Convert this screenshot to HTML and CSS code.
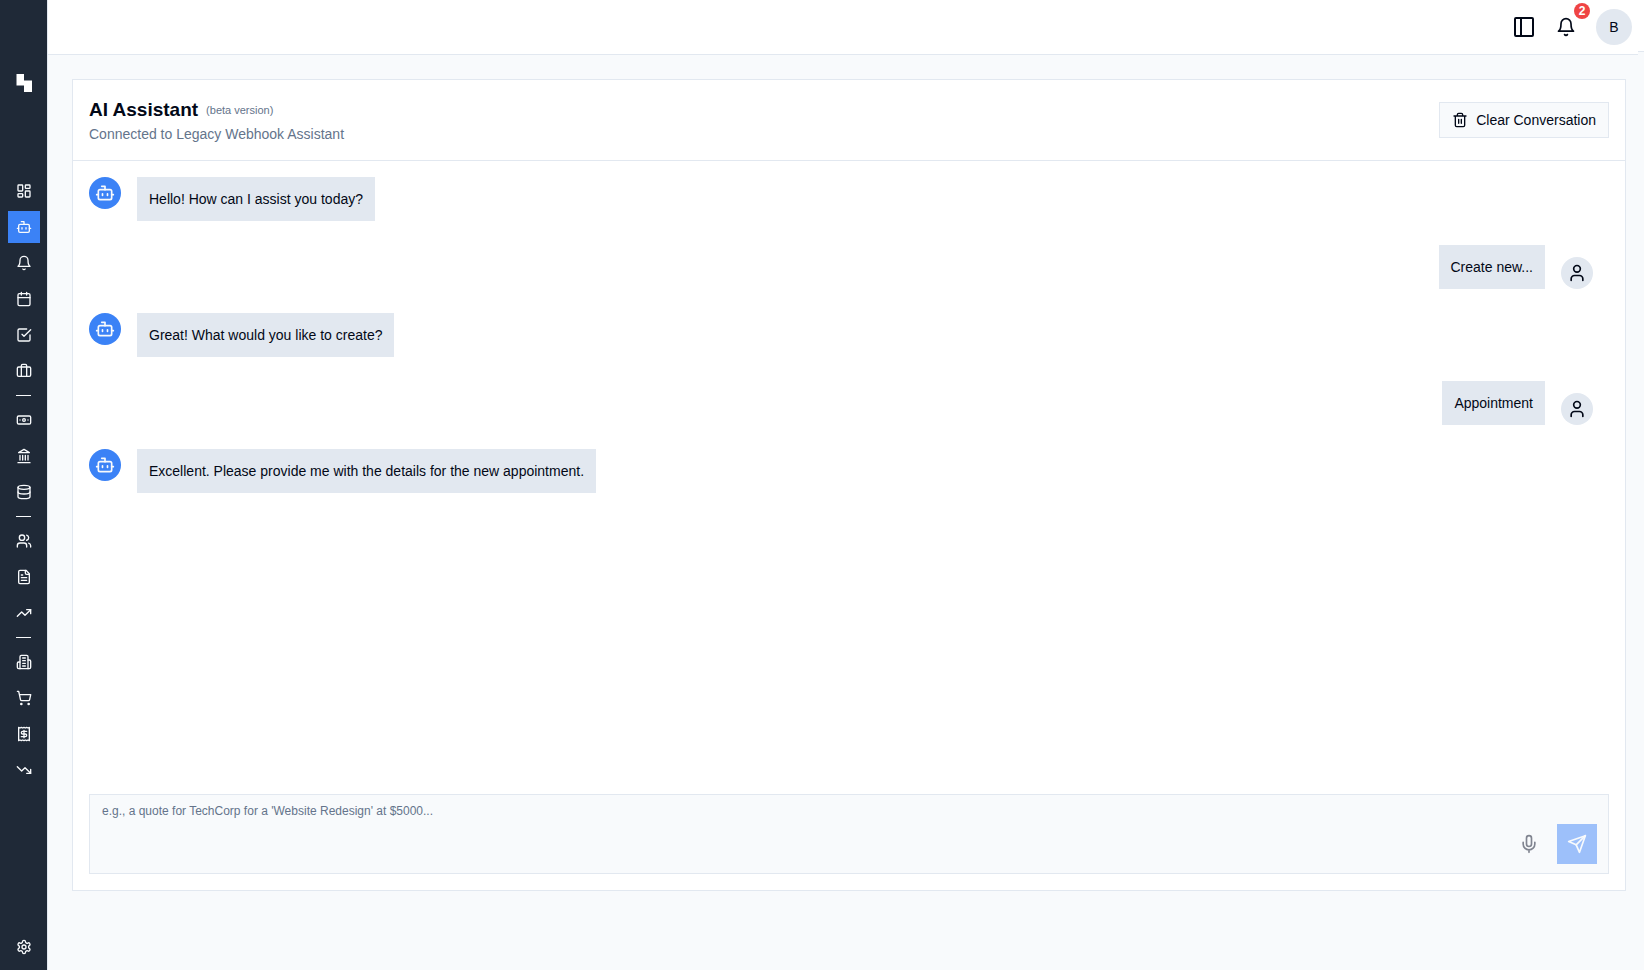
FILE: index.html
```html
<!DOCTYPE html>
<html lang="en">
<head>
<meta charset="utf-8">
<meta name="viewport" content="width=device-width, initial-scale=1">
<title>AI Assistant</title>
<link rel="stylesheet" href="styles.css">
</head>
<body>
<svg class="sprite" aria-hidden="true">
  <symbol id="bot" viewBox="0 0 24 24"><path d="M12 8V4H8"/><rect width="16" height="12" x="4" y="8" rx="2"/><path d="M2 14h2M20 14h2M15 13v2M9 13v2"/></symbol>
  <symbol id="bell" viewBox="0 0 24 24"><path d="M6 8a6 6 0 0 1 12 0c0 7 3 9 3 9H3s3-2 3-9"/><path d="M10.3 21a1.94 1.94 0 0 0 3.4 0"/></symbol>
  <symbol id="user" viewBox="0 0 24 24"><path d="M19 21v-2a4 4 0 0 0-4-4H9a4 4 0 0 0-4 4v2"/><circle cx="12" cy="7" r="4"/></symbol>
</svg>
<div class="app">
  <aside class="sidebar">
    <a class="logo" href="#" aria-label="Home"><svg viewBox="0 0 16 18"><path d="M.5 0H8v6.500h8V18H8v-6.500H.5z"/></svg></a>
    <nav class="nav" aria-label="Main">
      <a class="nav-link" href="#" aria-label="Dashboard"><svg class="icon" viewBox="0 0 24 24"><rect width="7" height="9" x="3" y="3" rx="1"/><rect width="7" height="5" x="14" y="3" rx="1"/><rect width="7" height="9" x="14" y="12" rx="1"/><rect width="7" height="5" x="3" y="16" rx="1"/></svg></a>
      <a class="nav-link active" href="#" aria-label="AI Assistant" aria-current="page"><svg class="icon"><use href="#bot"/></svg></a>
      <a class="nav-link" href="#" aria-label="Notifications"><svg class="icon"><use href="#bell"/></svg></a>
      <a class="nav-link" href="#" aria-label="Calendar"><svg class="icon" viewBox="0 0 24 24"><path d="M8 2v4M16 2v4"/><rect width="18" height="18" x="3" y="4" rx="2"/><path d="M3 10h18"/></svg></a>
      <a class="nav-link" href="#" aria-label="Tasks"><svg class="icon" viewBox="0 0 24 24"><path d="m9 11 3 3L22 4"/><path d="M21 12v7a2 2 0 0 1-2 2H5a2 2 0 0 1-2-2V5a2 2 0 0 1 2-2h11"/></svg></a>
      <a class="nav-link" href="#" aria-label="Projects"><svg class="icon" viewBox="0 0 24 24"><path d="M16 20V4a2 2 0 0 0-2-2h-4a2 2 0 0 0-2 2v16"/><rect width="20" height="14" x="2" y="6" rx="2"/></svg></a>
      <hr class="nav-rule">
      <a class="nav-link" href="#" aria-label="Payments"><svg class="icon" viewBox="0 0 24 24"><rect width="20" height="12" x="2" y="6" rx="2"/><circle cx="12" cy="12" r="2"/><path d="M6 12h.01M18 12h.01"/></svg></a>
      <a class="nav-link" href="#" aria-label="Banking"><svg class="icon" viewBox="0 0 24 24"><path d="M3 22h18M6 18v-7M10 18v-7M14 18v-7M18 18v-7"/><path d="m12 2 8 5H4z"/></svg></a>
      <a class="nav-link" href="#" aria-label="Data"><svg class="icon" viewBox="0 0 24 24"><ellipse cx="12" cy="5" rx="9" ry="3"/><path d="M3 5v14a9 3 0 0 0 18 0V5"/><path d="M3 12a9 3 0 0 0 18 0"/></svg></a>
      <hr class="nav-rule">
      <a class="nav-link" href="#" aria-label="Clients"><svg class="icon" viewBox="0 0 24 24"><path d="M16 21v-2a4 4 0 0 0-4-4H6a4 4 0 0 0-4 4v2"/><circle cx="9" cy="7" r="4"/><path d="M22 21v-2a4 4 0 0 0-3-3.870M16 3.130a4 4 0 0 1 0 7.750"/></svg></a>
      <a class="nav-link" href="#" aria-label="Quotes"><svg class="icon" viewBox="0 0 24 24"><path d="M15 2H6a2 2 0 0 0-2 2v16a2 2 0 0 0 2 2h12a2 2 0 0 0 2-2V7Z"/><path d="M14 2v4a2 2 0 0 0 2 2h4M10 9H8M16 13H8M16 17H8"/></svg></a>
      <a class="nav-link" href="#" aria-label="Revenue"><svg class="icon" viewBox="0 0 24 24"><path d="m22 7-8.500 8.500-5-5L2 17"/><path d="M16 7h6v6"/></svg></a>
      <hr class="nav-rule">
      <a class="nav-link" href="#" aria-label="Suppliers"><svg class="icon" viewBox="0 0 24 24"><path d="M6 22V4a2 2 0 0 1 2-2h8a2 2 0 0 1 2 2v18Z"/><path d="M6 12H4a2 2 0 0 0-2 2v6a2 2 0 0 0 2 2h2M18 9h2a2 2 0 0 1 2 2v9a2 2 0 0 1-2 2h-2M10 6h4M10 10h4M10 14h4M10 18h4"/></svg></a>
      <a class="nav-link" href="#" aria-label="Purchases"><svg class="icon" viewBox="0 0 24 24"><circle cx="8" cy="21" r="1"/><circle cx="19" cy="21" r="1"/><path d="M2.050 2.050h2l2.660 12.420a2 2 0 0 0 2 1.580h9.780a2 2 0 0 0 1.950-1.570l1.650-7.430H5.120"/></svg></a>
      <a class="nav-link" href="#" aria-label="Receipts"><svg class="icon" viewBox="0 0 24 24"><path d="M4 2v20l2-1 2 1 2-1 2 1 2-1 2 1 2-1 2 1V2l-2 1-2-1-2 1-2-1-2 1-2-1-2 1Z"/><path d="M16 8h-6a2 2 0 1 0 0 4h4a2 2 0 1 1 0 4H8M12 17.500v-11"/></svg></a>
      <a class="nav-link" href="#" aria-label="Expenses"><svg class="icon" viewBox="0 0 24 24"><path d="m22 17-8.500-8.500-5 5L2 7"/><path d="M16 17h6v-6"/></svg></a>
    </nav>
    <a class="nav-link" href="#" aria-label="Settings"><svg class="icon" viewBox="0 0 24 24"><path d="M12.220 2h-.440a2 2 0 0 0-2 2v.180a2 2 0 0 1-1 1.730l-.430.250a2 2 0 0 1-2 0l-.150-.080a2 2 0 0 0-2.730.730l-.220.380a2 2 0 0 0 .730 2.730l.150.100a2 2 0 0 1 1 1.720v.510a2 2 0 0 1-1 1.740l-.150.090a2 2 0 0 0-.730 2.730l.220.380a2 2 0 0 0 2.730.730l.150-.080a2 2 0 0 1 2 0l.430.250a2 2 0 0 1 1 1.730V20a2 2 0 0 0 2 2h.440a2 2 0 0 0 2-2v-.180a2 2 0 0 1 1-1.730l.430-.250a2 2 0 0 1 2 0l.150.080a2 2 0 0 0 2.730-.730l.220-.390a2 2 0 0 0-.730-2.730l-.150-.080a2 2 0 0 1-1-1.740v-.500a2 2 0 0 1 1-1.740l.150-.090a2 2 0 0 0 .730-2.730l-.220-.380a2 2 0 0 0-2.730-.730l-.150.080a2 2 0 0 1-2 0l-.430-.250a2 2 0 0 1-1-1.730V4a2 2 0 0 0-2-2z"/><circle cx="12" cy="12" r="3"/></svg></a>
  </aside>

  <div class="page">
    <div class="topbar">
      <header class="topbar-main">
        <button class="icon-button" type="button" aria-label="Toggle sidebar"><svg class="icon icon-lg" viewBox="0 0 24 24"><rect width="18" height="18" x="3" y="3" rx="1"/><path d="M9 3v18"/></svg></button>
        <button class="icon-button bell-button" type="button" aria-label="Notifications"><svg class="icon icon-md"><use href="#bell"/></svg><span class="badge">2</span></button>
        <button class="profile" type="button">B</button>
      </header>
      <div class="topbar-gutter"></div>
    </div>

    <main class="content">
      <section class="card">
        <header class="card-header">
          <div>
            <h1 class="title">AI Assistant <span class="tag">(beta version)</span></h1>
            <p class="subtitle">Connected to Legacy Webhook Assistant</p>
          </div>
          <button class="clear-button" type="button"><svg class="icon" viewBox="0 0 24 24"><path d="M3 6h18M19 6v14a2 2 0 0 1-2 2H7a2 2 0 0 1-2-2V6M8 6V4a2 2 0 0 1 2-2h4a2 2 0 0 1 2 2v2M10 11v6M14 11v6"/></svg>Clear Conversation</button>
        </header>

        <div class="messages">
          <div class="message"><span class="avatar avatar-bot"><svg class="icon icon-md"><use href="#bot"/></svg></span><p class="bubble">Hello! How can I assist you today?</p></div>
          <div class="message message-user"><p class="bubble">Create new...</p><span class="avatar"><svg class="icon icon-md"><use href="#user"/></svg></span></div>
          <div class="message"><span class="avatar avatar-bot"><svg class="icon icon-md"><use href="#bot"/></svg></span><p class="bubble">Great! What would you like to create?</p></div>
          <div class="message message-user"><p class="bubble">Appointment</p><span class="avatar"><svg class="icon icon-md"><use href="#user"/></svg></span></div>
          <div class="message"><span class="avatar avatar-bot"><svg class="icon icon-md"><use href="#bot"/></svg></span><p class="bubble">Excellent. Please provide me with the details for the new appointment.</p></div>
        </div>

        <form class="composer">
          <textarea class="composer-input" aria-label="Message" placeholder="e.g., a quote for TechCorp for a 'Website Redesign' at $5000..."></textarea>
          <button class="composer-button mic-button" type="button" aria-label="Record voice"><svg class="icon icon-md" viewBox="0 0 24 24"><path d="M12 2a3 3 0 0 0-3 3v7a3 3 0 0 0 6 0V5a3 3 0 0 0-3-3Z"/><path d="M19 10v2a7 7 0 0 1-14 0v-2M12 19v3"/></svg></button>
          <button class="composer-button send-button" type="submit" aria-label="Send" disabled><svg class="icon icon-md" viewBox="0 0 24 24"><path d="m22 2-7 20-4-9-9-4Z"/><path d="M22 2 11 13"/></svg></button>
        </form>
      </section>
    </main>
  </div>
</div>
</body>
</html>
```
FILE: styles.css
```css
:root {
  --ink: #020817;
  --muted: #64748b;
  --line: #e2e8f0;
  --surface: #f8fafc;
  --blue: #3b82f6;
}

* {
  box-sizing: border-box;
}

body {
  margin: 0;
  color: var(--ink);
  background: var(--surface);
  font-family: "Liberation Sans", Arial, sans-serif;
  font-size: 14px;
  line-height: 20px;
}

button,
textarea {
  font: inherit;
  color: inherit;
}

button {
  display: flex;
  align-items: center;
  justify-content: center;
  padding: 0;
  border: 0;
  background: none;
}

h1,
p {
  margin: 0;
}

.sprite {
  position: absolute;
  width: 0;
  height: 0;
}

.icon {
  display: block;
  flex: none;
  width: 16px;
  height: 16px;
  fill: none;
  stroke: currentColor;
  stroke-width: 2;
  stroke-linecap: round;
  stroke-linejoin: round;
}

.icon-md {
  width: 20px;
  height: 20px;
}

.icon-lg {
  width: 24px;
  height: 24px;
}

.app {
  display: flex;
  min-height: 100vh;
}

/* Sidebar */
.sidebar {
  display: flex;
  flex: none;
  flex-direction: column;
  width: 48px;
  padding: 74px 7px 7px 8px;
  border-right: 1px solid var(--line);
  background: #1f2937;
}

.logo {
  align-self: center;
  width: 16px;
  height: 18px;
  margin-bottom: 83px;
}

.logo svg {
  display: block;
  fill: #fff;
}

.nav {
  display: flex;
  flex: 1;
  flex-direction: column;
  gap: 4px;
}

.nav-link {
  display: flex;
  align-items: center;
  justify-content: center;
  height: 32px;
  color: var(--surface);
}

.nav-link.active {
  background: var(--blue);
}

.nav-rule {
  width: 15px;
  height: 1px;
  margin: 4px 8px;
  border: 0;
  background: var(--surface);
}

/* Top bar */
.page {
  display: flex;
  flex: 1;
  flex-direction: column;
  min-width: 0;
}

.topbar {
  display: flex;
  align-items: flex-start;
}

.topbar-main {
  display: flex;
  flex: 1;
  align-items: center;
  justify-content: flex-end;
  gap: 10px;
  padding: 7px 6px;
  border-bottom: 1px solid var(--line);
  background: #fff;
}

.topbar-gutter {
  width: 6px;
  height: 52px;
  border-bottom: 1px solid var(--line);
  background: #fff;
}

.bell-button {
  position: relative;
  width: 40px;
  height: 40px;
}

.badge {
  position: absolute;
  top: -4px;
  right: -4px;
  width: 16px;
  height: 16px;
  border-radius: 50%;
  color: #fff;
  background: #ef4444;
  font-size: 12px;
  font-weight: 700;
  line-height: 16px;
  text-align: center;
}

.profile {
  width: 36px;
  height: 36px;
  border-radius: 50%;
  background: var(--line);
}

/* Chat card */
.content {
  display: flex;
  flex: 1;
  padding: 24px 18px 79px 24px;
}

.card {
  display: flex;
  flex: 1;
  flex-direction: column;
  min-width: 0;
  border: 1px solid var(--line);
  background: #fff;
}

.card-header {
  display: flex;
  align-items: center;
  justify-content: space-between;
  padding: 16px;
  border-bottom: 1px solid var(--line);
}

.title {
  display: flex;
  align-items: center;
  gap: 8px;
  font-size: 19px;
  font-weight: 700;
  line-height: 28px;
}

.tag {
  color: var(--muted);
  font-size: 11px;
  font-weight: 400;
}

.subtitle {
  color: var(--muted);
}

.clear-button {
  gap: 8px;
  height: 36px;
  padding: 0 12px;
  border: 1px solid var(--line);
  background: var(--surface);
}

.messages {
  display: flex;
  flex: 1;
  flex-direction: column;
  gap: 24px;
  padding: 16px 32px 16px 16px;
}

.message {
  display: flex;
  align-items: flex-start;
  gap: 16px;
}

.message-user {
  align-items: flex-end;
  justify-content: flex-end;
}

.avatar {
  display: flex;
  flex: none;
  align-items: center;
  justify-content: center;
  width: 32px;
  height: 32px;
  border-radius: 50%;
  background: var(--line);
}

.avatar-bot {
  color: var(--surface);
  background: var(--blue);
}

.bubble {
  padding: 12px;
  background: var(--line);
}

.composer {
  display: flex;
  align-items: flex-end;
  gap: 8px;
  margin: 16px;
  padding-right: 11px;
  border: 1px solid var(--line);
  background: var(--surface);
}

.composer-input {
  flex: 1;
  min-width: 0;
  height: 78px;
  padding: 8px 12px;
  border: 0;
  outline: 0;
  background: none;
  font-size: 12px;
  line-height: 16px;
  resize: none;
}

.composer-input::placeholder {
  color: var(--muted);
  opacity: 1;
}

.composer-button {
  width: 40px;
  height: 40px;
  margin-bottom: 9px;
}

.mic-button {
  color: #808490;
}

.send-button {
  color: var(--surface);
  background: #9dc0fa;
}
```
